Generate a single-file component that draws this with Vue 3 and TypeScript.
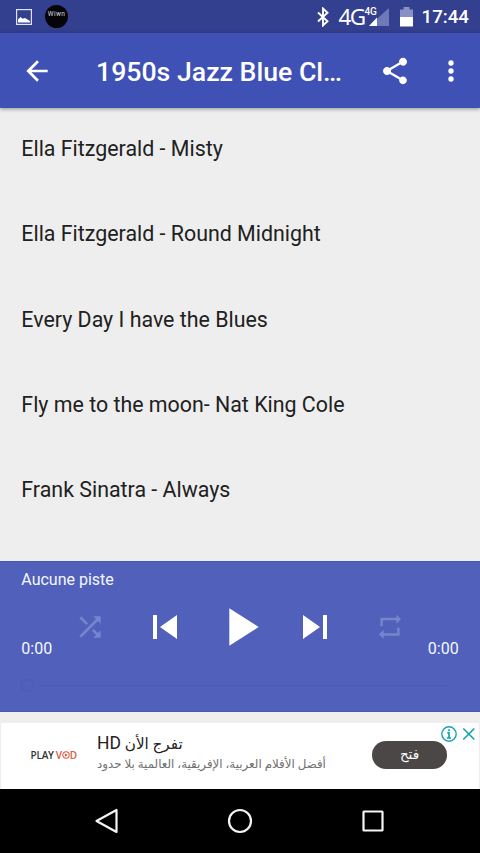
<script setup lang="ts">
interface Track {
  id: number
  title: string
}

const tracks: Track[] = [
  { id: 1, title: 'Ella Fitzgerald - Misty' },
  { id: 2, title: 'Ella Fitzgerald - Round Midnight' },
  { id: 3, title: 'Every Day I have the Blues' },
  { id: 4, title: 'Fly me to the moon- Nat King Cole' },
  { id: 5, title: 'Frank Sinatra - Always' },
]
</script>

<template>
  <div class="screen">
    <header class="status">
      <div class="status-left">
        <svg class="picture" viewBox="0 0 16 16">
          <rect x="0.6" y="0.6" width="14.8" height="14.8" fill="none" stroke="#dfe3f8" stroke-width="1.2" />
          <path d="M2 13.500V10.500l2.500-2.500 2.200 1.800L9 9l5 3v1.500z" fill="#fff" />
        </svg>
        <span class="badge">Wiwn</span>
      </div>
      <div class="status-right">
        <svg class="bluetooth" viewBox="0 0 12 20">
          <path d="M1 5.500l9.500 8.700L6 18.500V1.500l4.500 4.300L1 14.500" fill="none" stroke="#fff" stroke-width="1.9" />
        </svg>
        <span class="network">4G</span>
        <span class="signal">
          <svg viewBox="0 0 20 18">
            <path d="M20 0v18H0z" fill="#7079b8" />
            <path d="M8 9.500v8.500H0z" fill="#fff" />
          </svg>
          <span class="signal-type">4G</span>
        </span>
        <svg class="battery" viewBox="0 0 13 20">
          <path d="M0 2.500h3.500V0h6v2.500H13V10H0z" fill="#8990c4" />
          <path d="M0 10h13v9.500H0z" fill="#fff" />
        </svg>
        <span class="clock">17:44</span>
      </div>
    </header>

    <div class="toolbar">
      <svg class="icon" viewBox="0 0 24 24"><path d="M20 11H7.830l5.590-5.590L12 4l-8 8 8 8 1.410-1.410L7.830 13H20v-2z" /></svg>
      <h1>1950s Jazz Blue Cl…</h1>
      <svg class="icon share" viewBox="0 0 24 24"><path d="M18 16.080c-.76 0-1.440.3-1.960.77L8.910 12.700c.05-.23.09-.46.09-.7s-.04-.47-.09-.7l7.050-4.110c.54.5 1.250.81 2.040.81 1.660 0 3-1.340 3-3s-1.340-3-3-3-3 1.340-3 3c0 .24.04.47.09.7L8.040 9.810C7.500 9.310 6.790 9 6 9c-1.660 0-3 1.340-3 3s1.340 3 3 3c.79 0 1.500-.31 2.040-.81l7.120 4.160c-.05.21-.08.43-.08.65 0 1.610 1.310 2.920 2.920 2.920s2.920-1.310 2.920-2.920-1.310-2.920-2.920-2.920z" /></svg>
      <svg class="icon" viewBox="0 0 24 24"><circle cx="12" cy="6" r="2" /><circle cx="12" cy="12" r="2" /><circle cx="12" cy="18" r="2" /></svg>
    </div>

    <ul class="tracks">
      <li v-for="track in tracks" :key="track.id">{{ track.title }}</li>
    </ul>

    <section class="player">
      <div class="now">Aucune piste</div>
      <div class="controls">
        <svg class="icon mode" viewBox="0 0 24 24"><path d="M10.590 9.170L5.410 4 4 5.410l5.170 5.170 1.420-1.410zM14.500 4l2.040 2.040L4 18.590 5.410 20 17.960 7.460 20 9.500V4h-5.500zm.33 9.410l-1.410 1.410 3.130 3.130L14.500 20H20v-5.500l-2.040 2.040-3.130-3.130z" /></svg>
        <svg class="icon skip" viewBox="0 0 24 24"><path d="M6 6h2v12H6zm3.500 6l8.500 6V6z" /></svg>
        <svg class="icon play" viewBox="0 0 24 24"><path d="M8 5v14l11-7z" /></svg>
        <svg class="icon skip" viewBox="0 0 24 24"><path d="M6 18l8.500-6L6 6v12zM16 6v12h2V6h-2z" /></svg>
        <svg class="icon mode" viewBox="0 0 24 24"><path d="M4.800 5.100H16.800V2.600l3.500 3.500-3.500 3.500V7H6.600v4.500H4.800zM19.200 18.500H7.200V21l-3.500-3.500L7.200 14v2.600h10.200V12.500h1.800z" /></svg>
      </div>
      <div class="times"><span>0:00</span><span>0:00</span></div>
      <div class="seek"><i class="thumb"></i><i class="line"></i></div>
    </section>

    <section class="ad">
      <div class="brand"><span>PLAY</span><span class="vod">V<svg viewBox="0 0 10 10"><circle cx="5" cy="5" r="4" fill="none" stroke="currentColor" stroke-width="1.300" /><path d="M3.500 2.800L7.200 5 3.500 7.200z" fill="currentColor" /></svg>D</span></div>
      <div class="copy">
        <div class="headline" dir="rtl">تفرج الأن <span class="latin">HD</span></div>
        <div class="detail" dir="rtl">أفضل الأفلام العربية، الإفريقية، العالمية بلا حدود</div>
      </div>
      <button class="open" type="button">فتح</button>
      <div class="choices">
        <svg viewBox="0 0 18 18"><circle cx="9" cy="9" r="7.200" fill="none" stroke="#16a3b0" stroke-width="1.400" /><path d="M9 4.200v2M7.300 7.800H9v5M7 13h4" fill="none" stroke="#16a3b0" stroke-width="1.700" /></svg>
        <svg viewBox="0 0 18 18"><path d="M3.300 3.500l11 11M14.300 3.500l-11 11" stroke="#16a3b0" stroke-width="1.700" /></svg>
      </div>
    </section>

    <nav class="nav">
      <svg viewBox="0 0 28 28"><path d="M23.500 3v22L3.500 14z" /></svg>
      <svg viewBox="0 0 28 28"><circle cx="14" cy="14" r="11" /></svg>
      <svg viewBox="0 0 28 28"><rect x="4.500" y="4.500" width="19" height="19" rx="0.500" /></svg>
    </nav>
  </div>
</template>

<style>
body {
  margin: 0;
  background: #eeeeee;
}
</style>

<style scoped>
.screen {
  width: 480px;
  height: 853px;
  overflow: hidden;
  display: flex;
  flex-direction: column;
  background: #eeeeee;
  font-family: Roboto, "DejaVu Sans", sans-serif;
}
.screen svg {
  display: block;
  flex: none;
}
.status {
  height: 33px;
  flex: none;
  box-sizing: border-box;
  padding: 0 11px 0 16px;
  display: flex;
  justify-content: space-between;
  background: #333f8f;
  color: #fff;
}
.status-left,
.status-right {
  display: flex;
  align-items: center;
}
.picture {
  width: 16px;
  height: 16px;
  margin-right: 13px;
}
.badge {
  width: 23px;
  height: 23px;
  border-radius: 50%;
  background: #050509;
  font-size: 6.500px;
  line-height: 19px;
  letter-spacing: 0.4px;
  text-align: center;
  color: #ddd;
}
.bluetooth {
  width: 12px;
  height: 20px;
  margin-right: 10px;
}
.network {
  font: 22.500px/34px "Noto Sans", sans-serif;
  width: 25px;
  letter-spacing: -1.800px;
}
.signal {
  position: relative;
  margin: 0 11px 0 5px;
}
.signal svg {
  width: 20px;
  height: 18px;
}
.signal-type {
  position: absolute;
  left: -4px;
  top: -1px;
  padding-right: 1px;
  background: #333f8f;
  font-size: 10px;
  font-weight: 500;
  line-height: 9px;
  letter-spacing: -0.3px;
}
.battery {
  width: 13px;
  height: 20px;
  margin-right: 9px;
}
.clock {
  font-size: 18.700px;
  font-weight: 500;
  line-height: 36px;
}
.toolbar {
  height: 75px;
  flex: none;
  box-sizing: border-box;
  padding: 0 13.500px 0 21px;
  display: flex;
  align-items: center;
  background: #3f51b5;
  box-shadow: 0 1px 4px rgba(0, 0, 0, 0.4);
  z-index: 1;
}
.icon {
  width: 32px;
  height: 32px;
  fill: #fff;
}
.toolbar h1 {
  flex: 1;
  margin: 2px 0 0 43px;
  font-size: 26.670px;
  font-weight: 500;
  line-height: 32px;
  color: #fff;
  white-space: nowrap;
}
.share {
  margin-right: 24px;
}
.tracks {
  flex: 1;
  min-height: 0;
  margin: -1.900px 0 0;
  padding: 0;
  overflow: hidden;
  list-style: none;
}
.tracks li {
  height: 85.330px;
  padding-left: 21.330px;
  font-size: 21.380px;
  line-height: 85.330px;
  color: #212121;
}
.player {
  height: 151px;
  flex: none;
  box-sizing: border-box;
  padding: 8px 21.300px 0;
  background: #5060bb;
  border-top: 1px solid #4858ae;
  border-bottom: 1px solid #4858ae;
  color: #f5f6ff;
  font-size: 16px;
  line-height: 20px;
}
.controls {
  height: 48px;
  margin: 12.500px 0 -11.500px;
  display: flex;
  align-items: center;
  justify-content: center;
  gap: 19px;
}
.controls .mode:first-child {
  margin-right: 16px;
}
.controls .mode:last-child {
  margin-left: 16px;
}
.skip {
  width: 48px;
  height: 48px;
}
.play {
  width: 64px;
  height: 64px;
}
.mode {
  fill: #7885cc;
}
.times {
  display: flex;
  justify-content: space-between;
}
.seek {
  display: flex;
  align-items: center;
  gap: 5px;
  height: 14px;
  margin-top: 19px;
}
.thumb {
  box-sizing: border-box;
  width: 13px;
  height: 13px;
  border: 1px solid #4b5bb5;
  border-radius: 50%;
}
.line {
  width: 407px;
  height: 1px;
  background: #4b5bb5;
}
.ad {
  position: relative;
  height: 66px;
  flex: none;
  box-sizing: border-box;
  margin: 11px 1px 0;
  padding-left: 29.500px;
  display: flex;
  background: #fff;
}
.brand {
  width: 66.500px;
  display: flex;
  align-items: center;
  font: 600 10px/12px "Open Sans", sans-serif;
  letter-spacing: -0.2px;
  color: #333;
}
.brand > span {
  margin-top: -2px;
}
.vod {
  display: flex;
  align-items: center;
  margin-left: 2px;
  color: #d9593f;
}
.vod svg {
  width: 8px;
  height: 8px;
}
.copy {
  width: 230px;
  padding-top: 9px;
}
.headline,
.detail {
  width: max-content;
  white-space: nowrap;
}
.headline {
  font-size: 15.200px;
  line-height: 22px;
  height: 22px;
  color: #222;
}
.latin {
  font-size: 17.500px;
}
.detail {
  font-size: 11.850px;
  line-height: 20px;
  color: #707070;
}
.open {
  width: 75px;
  height: 28px;
  margin: 18px 0 0 45px;
  padding: 0 0 2px;
  border: 0;
  border-radius: 14px;
  background: #4b4746;
  color: #fff;
  font: 13.500px/24px "DejaVu Sans", sans-serif;
}
.choices {
  position: absolute;
  top: 2px;
  right: 1px;
  display: flex;
  gap: 2px;
  background: #fff;
  border-bottom-left-radius: 10px;
}
.choices svg {
  width: 18px;
  height: 18px;
}
.nav {
  height: 64px;
  flex: none;
  display: flex;
  justify-content: center;
  align-items: center;
  gap: 105.300px;
  background: #000;
}
.nav svg {
  width: 28px;
  height: 28px;
  fill: none;
  stroke: #f5f5f5;
  stroke-width: 2.200px;
  stroke-linejoin: round;
}
</style>
